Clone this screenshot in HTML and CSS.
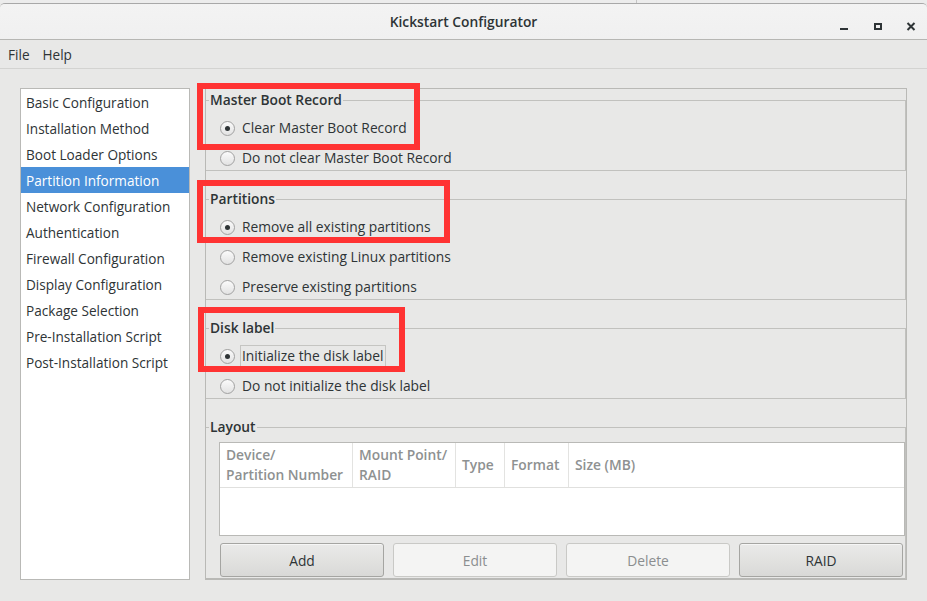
FILE: index.html
```html
<!DOCTYPE html>
<html>
<head>
<meta charset="utf-8">
<title>Kickstart Configurator</title>
<link rel="stylesheet" href="styles.css">
</head>
<body>
<div class="desk"><div class="desk-line"></div></div>
<div class="window">
  <header class="titlebar">
    <div class="title">Kickstart Configurator</div>
    <div class="controls">
      <svg class="ctl" width="12" height="12" viewBox="0 0 12 12"><rect x="1" y="8" width="8" height="2" fill="#2e3436"/></svg>
      <svg class="ctl" width="12" height="12" viewBox="0 0 12 12"><rect x="3" y="4" width="6" height="5" fill="none" stroke="#2e3436" stroke-width="2"/></svg>
      <svg class="ctl" width="12" height="12" viewBox="0 0 12 12"><path d="M2.5 3 L9.5 10 M9.5 3 L2.5 10" stroke="#2e3436" stroke-width="2"/></svg>
    </div>
  </header>
  <nav class="menubar">
    <span class="menu">File</span>
    <span class="menu">Help</span>
  </nav>
  <main class="content">
    <ul class="sidebar">
      <li>Basic Configuration</li>
      <li>Installation Method</li>
      <li>Boot Loader Options</li>
      <li class="sel">Partition Information</li>
      <li>Network Configuration</li>
      <li>Authentication</li>
      <li>Firewall Configuration</li>
      <li>Display Configuration</li>
      <li>Package Selection</li>
      <li>Pre-Installation Script</li>
      <li>Post-Installation Script</li>
    </ul>
    <section class="panel">
      <fieldset class="frame">
        <legend>Master Boot Record</legend>
        <div class="opts">
          <label class="opt"><span class="radio on"></span><span class="lbl">Clear Master Boot Record</span></label>
          <label class="opt"><span class="radio"></span><span class="lbl">Do not clear Master Boot Record</span></label>
        </div>
      </fieldset>
      <fieldset class="frame">
        <legend>Partitions</legend>
        <div class="opts">
          <label class="opt"><span class="radio on"></span><span class="lbl">Remove all existing partitions</span></label>
          <label class="opt"><span class="radio"></span><span class="lbl">Remove existing Linux partitions</span></label>
          <label class="opt"><span class="radio"></span><span class="lbl">Preserve existing partitions</span></label>
        </div>
      </fieldset>
      <fieldset class="frame">
        <legend>Disk label</legend>
        <div class="opts">
          <label class="opt"><span class="radio on"></span><span class="lbl focus">Initialize the disk label</span></label>
          <label class="opt"><span class="radio"></span><span class="lbl">Do not initialize the disk label</span></label>
        </div>
      </fieldset>
      <fieldset class="frame layout">
        <legend>Layout</legend>
        <div class="layout-body">
          <div class="table">
            <div class="thead">
              <div class="th c1">Device/<br>Partition Number</div>
              <div class="th c2">Mount Point/<br>RAID</div>
              <div class="th c3">Type</div>
              <div class="th c4">Format</div>
              <div class="th c5">Size (MB)</div>
            </div>
            <div class="tbody"></div>
          </div>
          <div class="buttons">
            <button class="btn">Add</button>
            <button class="btn" disabled>Edit</button>
            <button class="btn" disabled>Delete</button>
            <button class="btn">RAID</button>
          </div>
        </div>
      </fieldset>
    </section>
  </main>
</div>
<div class="mark m1"></div>
<div class="mark m2"></div>
<div class="mark m3"></div>
</body>
</html>
```
FILE: styles.css
```css
* { box-sizing: border-box; }
html, body { margin: 0; padding: 0; }
body {
  width: 927px;
  height: 601px;
  overflow: hidden;
  background: #e8e8e7;
  font-family: "Open Sans", "Lato", sans-serif;
  font-size: 13.8px;
  color: #2e3436;
  position: relative;
}
.desk {
  height: 3px;
  background: #ececec;
  position: relative;
}
.desk-line {
  position: absolute;
  left: 636px;
  top: 0;
  width: 1px;
  height: 3px;
  background: #c4c4c4;
}
.window {
  border-top: 1px solid #a8a8a8;
  border-radius: 5px 5px 0 0;
  background: #e8e8e7;
  overflow: hidden;
}
.titlebar {
  height: 36px;
  background: linear-gradient(#f3f3f3, #f0f0f0);
  border-bottom: 1px solid #b6b6b3;
  display: flex;
  align-items: center;
  justify-content: center;
  position: relative;
}
.title {
  font-weight: 600;
  font-size: 13.8px;
  color: #2e3436;
}
.controls {
  position: absolute;
  right: 10px;
  top: 16px;
  display: flex;
  gap: 21px;
}
.ctl { display: block; }
.menubar {
  height: 29px;
  border-bottom: 1px solid #d3d3d1;
  display: flex;
  align-items: center;
  padding: 2px 0 0 8px;
  gap: 13px;
  font-size: 13.6px;
}
.menu { color: #2e3436; line-height: 20px; }
.content {
  display: flex;
  padding: 19px 0 0 20px;
  gap: 15px;
  height: 532px;
}
.sidebar {
  list-style: none;
  margin: 0;
  padding: 0;
  width: 170px;
  height: 492px;
  background: #fff;
  border: 1px solid #b9b9b6;
  font-size: 13.6px;
}
.sidebar li {
  height: 26px;
  line-height: 25px;
  padding: 1px 0 0 5px;
  white-space: nowrap;
}
.sidebar li.sel {
  background: #4a90d9;
  color: #fff;
}
.panel {
  width: 702px;
  height: 492px;
  border: 1px solid #b9b9b6;
  padding-top: 2px;
  display: flex;
  flex-direction: column;
}
.frame {
  margin: 0 0 19px 0;
  padding: 0 0 1px 0;
  border: 1px solid #c1c1be;
  border-left: none;
  min-width: 0;
}
.frame legend {
  font-weight: 600;
  line-height: 18px;
  padding: 0 1px;
  margin-left: 3px;
}
.opts {
  display: flex;
  flex-direction: column;
  gap: 8px;
  padding: 8px 0 0 14px;
}
.opt {
  height: 22px;
  display: flex;
  align-items: center;
  gap: 7px;
}
.radio {
  width: 15px;
  height: 15px;
  border-radius: 50%;
  border: 1px solid #a1a1a1;
  background: linear-gradient(#fbfbfb, #e2e2e2);
  display: flex;
  align-items: center;
  justify-content: center;
  flex: none;
}
.radio.on::after {
  content: "";
  width: 5px;
  height: 5px;
  border-radius: 50%;
  background: #2e3436;
}
.lbl { line-height: 20px; }
.lbl.focus {
  border: 1px solid #c5c5c2;
  padding: 0 1px;
  margin-left: -2px;
}
.frame.layout {
  margin: 0;
  flex: 1;
  border-bottom: 1px solid #b9b9b6;
}
.layout-body {
  padding: 6px 0 0 13px;
  display: flex;
  flex-direction: column;
  gap: 7px;
}
.table {
  background: #fff;
  border: 1px solid #b9b9b6;
  height: 94px;
  display: flex;
  flex-direction: column;
}
.thead {
  display: flex;
  height: 45px;
  border-bottom: 1px solid #e0e0de;
}
.th {
  color: #8e9191;
  font-weight: 600;
  line-height: 20px;
  padding-left: 6px;
  display: flex;
  align-items: center;
  border-right: 1px solid #e3e3e1;
  white-space: nowrap;
}
.c1 { width: 133px; }
.c2 { width: 103px; }
.c3 { width: 49px; }
.c4 { width: 64px; }
.c5 { flex: 1; border-right: none; }
.tbody { flex: 1; }
.buttons {
  display: flex;
  gap: 9px;
  margin: 0 2px 0 1px;
}
.btn {
  flex: 1;
  height: 34px;
  font-family: inherit;
  font-size: 13.8px;
  color: #2e3436;
  border: 1px solid #a5a5a2;
  border-radius: 3px;
  background: linear-gradient(#eaeae9, #d9d9d7);
  box-shadow: inset 0 1px #f6f6f6;
  padding: 0;
}
.btn:disabled {
  color: #8b8e8f;
  background: #f4f4f3;
  border-color: #c9c9c6;
  box-shadow: none;
}
.mark {
  position: absolute;
  border: 6px solid #ff3333;
}
.m1 { left: 197px; top: 83px; width: 223px; height: 67px; }
.m2 { left: 197px; top: 180px; width: 253px; height: 63px; }
.m3 { left: 198px; top: 307px; width: 207px; height: 65px; }
```
